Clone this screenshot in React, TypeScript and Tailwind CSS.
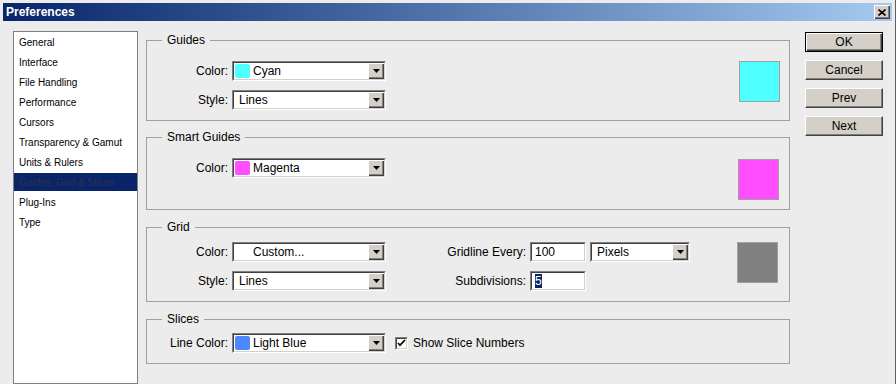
import type { ReactNode } from 'react';

const FONT = { fontFamily: '"Liberation Sans", Arial, sans-serif' };

const categories = [
  'General',
  'Interface',
  'File Handling',
  'Performance',
  'Cursors',
  'Transparency & Gamut',
  'Units & Rulers',
  'Guides, Grid & Slices',
  'Plug-Ins',
  'Type',
];

// sunken 2px frame used by selects, inputs and the checkbox
function Sunken({ className = '', children }: { className?: string; children: ReactNode }) {
  return (
    <div className={`border border-t-[#808080] border-l-[#808080] border-r-white border-b-white ${className}`}>
      <div className="h-full flex items-center bg-white border border-t-[#404040] border-l-[#404040] border-r-[#d4d0c8] border-b-[#d4d0c8]">
        {children}
      </div>
    </div>
  );
}

function Select({ value, swatch, width = 'w-[154px]' }: { value: string; swatch?: string | null; width?: string }) {
  return (
    <Sunken className={`${width} h-[20px] shrink-0`}>
      {swatch !== undefined ? (
        <div
          className="ml-[1px] w-[15px] h-[14px] rounded-[2px] shrink-0"
          style={{ background: swatch ?? 'transparent' }}
        />
      ) : null}
      <span className={`flex-1 truncate ${swatch !== undefined ? 'pl-[3px]' : 'pl-[5px]'}`}>{value}</span>
      <div className="w-[16px] h-full bg-[#d4d0c8] flex items-center justify-center shadow-[inset_1px_1px_#fff,inset_-1px_-1px_#404040,inset_-2px_-2px_#808080]">
        <svg width="7" height="4" viewBox="0 0 7 4">
          <path d="M0 0h7L3.5 4z" fill="#000" />
        </svg>
      </div>
    </Sunken>
  );
}

function Label({ children, w = 'w-[85px]' }: { children: ReactNode; w?: string }) {
  return <span className={`${w} shrink-0 text-right pr-[4px]`}>{children}</span>;
}

function Group({ title, className, children }: { title: string; className: string; children: ReactNode }) {
  return (
    <fieldset className={`border border-[#a0a0a0] ${className}`}>
      <legend className="ml-[15px] px-[5px] leading-[14px]">{title}</legend>
      {children}
    </fieldset>
  );
}

function Swatch({ color, className }: { color: string; className: string }) {
  return <div className={`w-[41px] h-[41px] border border-[#a0a0a0] ml-auto shrink-0 ${className}`} style={{ background: color }} />;
}

function Button({ label, primary }: { label: string; primary?: boolean }) {
  return (
    <button
      className={`w-[78px] h-[20px] bg-[#d4d0c8] leading-none ${
        primary
          ? 'border border-black shadow-[inset_1px_1px_#fff,inset_-1px_-1px_#404040,inset_-2px_-2px_#808080]'
          : 'border border-t-white border-l-white border-r-[#404040] border-b-[#404040] shadow-[inset_-1px_-1px_#808080]'
      }`}
    >
      {label}
    </button>
  );
}

export default function App() {
  return (
    <div
      className="w-[896px] h-[384px] overflow-hidden bg-[#ececec] text-[12px] text-black pt-[3px] pl-[3px] pr-[3px] border-r border-[#606060] flex flex-col"
      style={FONT}
    >
      {/* title bar */}
      <div className="h-[18px] shrink-0 flex items-center justify-between pl-[3px] pr-[2px] bg-gradient-to-r from-[#0a246a] to-[#a6caf0]">
        <span className="text-white font-bold text-[12px]">Preferences</span>
        <div className="w-[16px] h-[14px] bg-[#d4d0c8] flex items-center justify-center shadow-[inset_1px_1px_#fff,inset_-1px_-1px_#404040,inset_-2px_-2px_#808080]">
          <svg width="8" height="7" viewBox="0 0 8 7">
            <path d="M0.5 0.5l7 6M7.5 0.5l-7 6" stroke="#000" strokeWidth="1.6" />
          </svg>
        </div>
      </div>

      <div className="flex flex-1 min-h-0 pl-[10px]">
        {/* category list */}
        <div className="w-[125px] mt-[10px] shrink-0 bg-white border border-[#808080] pt-[1px] flex flex-col gap-[2px] text-[10px]">
          {categories.map(c => (
            <div
              key={c}
              className={`h-[18px] flex items-center pl-[5px] ${c === 'Guides, Grid & Slices' ? 'bg-[#0a246a] text-[#2e3048]' : ''}`}
            >
              {c}
            </div>
          ))}
        </div>

        {/* settings */}
        <div className="w-[644px] ml-[8px] mt-[12px] shrink-0 flex flex-col">
          <Group title="Guides" className="pt-[14px] pb-[10px]">
            <div className="flex items-start">
              <div className="flex flex-col gap-[9px]">
                <div className="flex items-center">
                  <Label>Color:</Label>
                  <Select value="Cyan" swatch="#4dffff" />
                </div>
                <div className="flex items-center">
                  <Label>Style:</Label>
                  <Select value="Lines" />
                </div>
              </div>
              <Swatch color="#4dffff" className="mr-[9px]" />
            </div>
          </Group>

          <Group title="Smart Guides" className="mt-[9px] pt-[14px] pb-[9px]">
            <div className="flex items-start">
              <div className="flex items-center">
                <Label>Color:</Label>
                <Select value="Magenta" swatch="#ff4dff" />
              </div>
              <Swatch color="#ff4dff" className="mr-[10px] mt-[1px]" />
            </div>
          </Group>

          <Group title="Grid" className="mt-[10px] pt-[8px] pb-[10px]">
            <div className="flex items-start">
              <div className="flex flex-col gap-[9px]">
                <div className="flex items-center">
                  <Label>Color:</Label>
                  <Select value="Custom..." swatch={null} />
                  <Label w="w-[144px]">Gridline Every:</Label>
                  <Sunken className="w-[56px] h-[20px]">
                    <span className="pl-[3px]">100</span>
                  </Sunken>
                  <div className="ml-[4px]">
                    <Select value="Pixels" width="w-[100px]" />
                  </div>
                </div>
                <div className="flex items-center">
                  <Label>Style:</Label>
                  <Select value="Lines" />
                  <Label w="w-[144px]">Subdivisions:</Label>
                  <Sunken className="w-[56px] h-[20px]">
                    <span className="ml-[3px] bg-[#0a246a] text-white leading-[14px]">5</span>
                  </Sunken>
                </div>
              </div>
              <Swatch color="#808080" className="mr-[11px]" />
            </div>
          </Group>

          <Group title="Slices" className="mt-[10px] pt-[7px] pb-[10px]">
            <div className="flex items-center">
              <Label>Line Color:</Label>
              <Select value="Light Blue" swatch="#4d88ff" />
              <Sunken className="ml-[9px] w-[13px] h-[13px]">
                <svg width="9" height="9" viewBox="0 0 9 9">
                  <path d="M1 4l2 2.2L8 1" stroke="#000" strokeWidth="1.7" fill="none" />
                </svg>
              </Sunken>
              <span className="ml-[5px]">Show Slice Numbers</span>
            </div>
          </Group>
        </div>

        {/* dialog buttons */}
        <div className="ml-[15px] mt-[11px] flex flex-col gap-[8px]">
          <Button label="OK" primary />
          <Button label="Cancel" />
          <Button label="Prev" />
          <Button label="Next" />
        </div>
      </div>
    </div>
  );
}
